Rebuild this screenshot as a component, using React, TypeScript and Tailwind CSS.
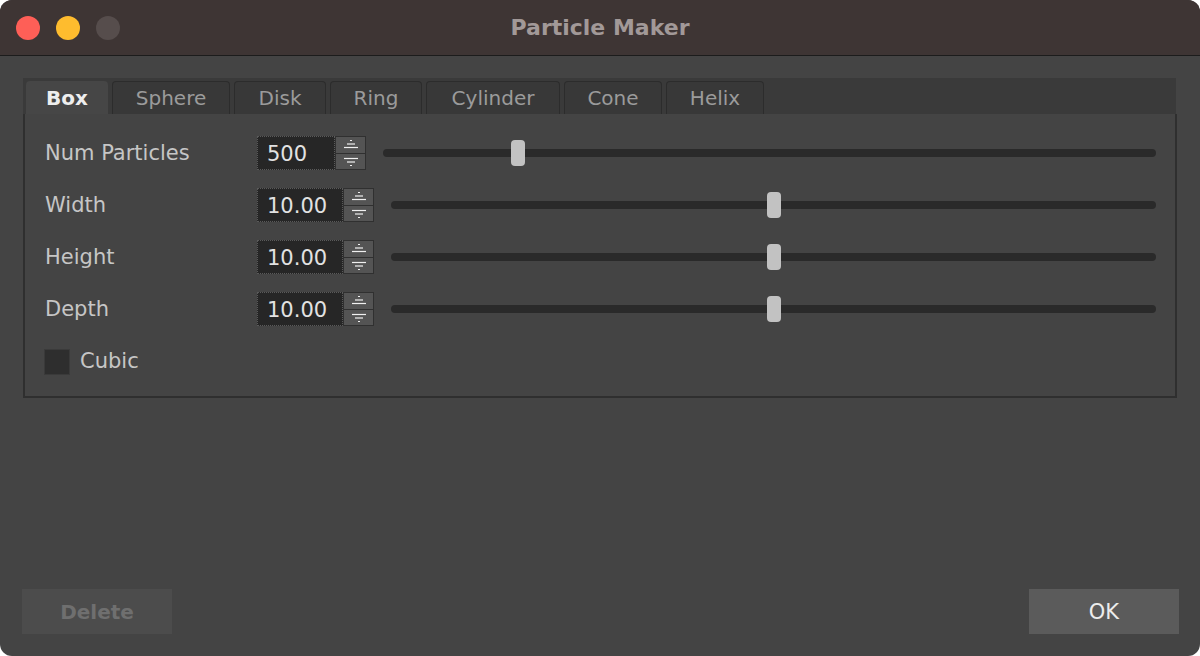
import React from 'react'

const font = { fontFamily: '"DejaVu Sans", "Liberation Sans", sans-serif' }

const tabs = [
  { name: 'Box', w: 'w-[82px]' },
  { name: 'Sphere', w: 'w-[118px]' },
  { name: 'Disk', w: 'w-[92px]' },
  { name: 'Ring', w: 'w-[92px]' },
  { name: 'Cylinder', w: 'w-[134px]' },
  { name: 'Cone', w: 'w-[98px]' },
  { name: 'Helix', w: 'w-[98px]' },
]

const rows = [
  { label: 'Num Particles', value: '500', box: 'w-[78px]', pos: 0.175 },
  { label: 'Width', value: '10.00', box: 'w-[86px]', pos: 0.5 },
  { label: 'Height', value: '10.00', box: 'w-[86px]', pos: 0.5 },
  { label: 'Depth', value: '10.00', box: 'w-[86px]', pos: 0.5 },
]

function Arrow({ up }: { up: boolean }) {
  return (
    <svg width="18" height="11" viewBox="0 0 18 11" className="block">
      {up ? (
        <g stroke="#f0f0f0" strokeWidth="1.2">
          <line x1="8" y1="1.5" x2="10" y2="1.5" />
          <line x1="5" y1="5" x2="13" y2="5" />
          <line x1="2" y1="8.5" x2="16" y2="8.5" />
        </g>
      ) : (
        <g stroke="#f0f0f0" strokeWidth="1.2">
          <line x1="2" y1="2.5" x2="16" y2="2.5" />
          <line x1="5" y1="6" x2="13" y2="6" />
          <line x1="8" y1="9.5" x2="10" y2="9.5" />
        </g>
      )}
    </svg>
  )
}

function Spin({ value, box }: { value: string; box: string }) {
  return (
    <div className="flex h-[34px]">
      <div className={`${box} h-full bg-[#262626] border border-dotted border-[#5a5a5a] flex items-center pl-[9px] pt-[3px] text-[21px] text-[#e2e2e2]`}>
        {value}
      </div>
      <div className="w-[31px] h-full flex flex-col">
        <div className="flex-1 bg-[#545454] border border-[#303030] flex items-center justify-center">
          <Arrow up />
        </div>
        <div className="flex-1 bg-[#545454] border border-[#303030] border-t-0 flex items-center justify-center">
          <Arrow up={false} />
        </div>
      </div>
    </div>
  )
}

function Slider({ pos }: { pos: number }) {
  return (
    <div className="relative flex-1 h-[26px] flex items-center">
      <div className="w-full h-[8px] rounded-full bg-[#2a2a2a]" />
      <div
        className="absolute top-0 w-[14px] h-[26px] rounded-[4px] bg-[#c2c2c2]"
        style={{ left: `calc(${pos * 100}% - 7px)` }}
      />
    </div>
  )
}

export default function App() {
  return (
    <div className="w-[1200px] h-[656px] bg-white" style={font}>
      <div className="w-full h-full rounded-[12px] overflow-hidden flex flex-col bg-[#444444]">
        <div className="relative h-[56px] shrink-0 bg-[#3e3534] border-b border-[#1c1c1c] flex items-center justify-center">
          <div className="absolute left-[16px] top-[16px] flex gap-[16px]">
            <div className="w-[24px] h-[24px] rounded-full bg-[#fe5f57]" />
            <div className="w-[24px] h-[24px] rounded-full bg-[#febc2e]" />
            <div className="w-[24px] h-[24px] rounded-full bg-[#564d4c]" />
          </div>
          <span className="text-[22px] font-bold text-[#a29998]">Particle Maker</span>
        </div>

        <div className="flex-1 flex flex-col px-[23px] pt-[22px] pb-[22px]">
          <div className="h-[36px] bg-[#3a3a3a] flex items-end pl-[3px] gap-[4px] mr-[1px]">
            {tabs.map((t, i) => (
              <div
                key={t.name}
                className={`${t.w} h-[33px] rounded-t-[4px] flex items-center justify-center text-[20px] ${
                  i === 0
                    ? 'bg-[#464646] text-[#eeeeee] font-bold'
                    : 'bg-[#383838] text-[#9b9b9b] border border-b-0 border-[#2c2c2c]'
                }`}
              >
                {t.name}
              </div>
            ))}
          </div>

          <div className="h-[284px] border-2 border-t-0 border-[#2f2f2f] pl-[20px] pr-[19px] pt-[22px] flex flex-col gap-[18px]">
            {rows.map((r) => (
              <div key={r.label} className="flex items-center h-[34px]">
                <div className="w-[212px] pt-[2px] text-[21px] text-[#c6c6c6]">{r.label}</div>
                <Spin value={r.value} box={r.box} />
                <div className="w-[17px]" />
                <Slider pos={r.pos} />
              </div>
            ))}
            <div className="flex items-center gap-[10px] mt-[2px] -ml-[1px]">
              <div className="w-[26px] h-[26px] bg-[#2e2e2e] border border-[#3a3a3a]" />
              <span className="text-[21px] text-[#c6c6c6]">Cubic</span>
            </div>
          </div>

          <div className="flex-1" />

          <div className="flex justify-between ml-[-1px] mr-[-2px]">
            <div className="w-[150px] h-[45px] bg-[#4c4c4c] flex items-center justify-center text-[20px] font-bold text-[#6f6f6f]">
              Delete
            </div>
            <div className="w-[150px] h-[45px] bg-[#5b5b5b] flex items-center justify-center pt-[2px] text-[21px] text-[#ececec]">
              OK
            </div>
          </div>
        </div>
      </div>
    </div>
  )
}
